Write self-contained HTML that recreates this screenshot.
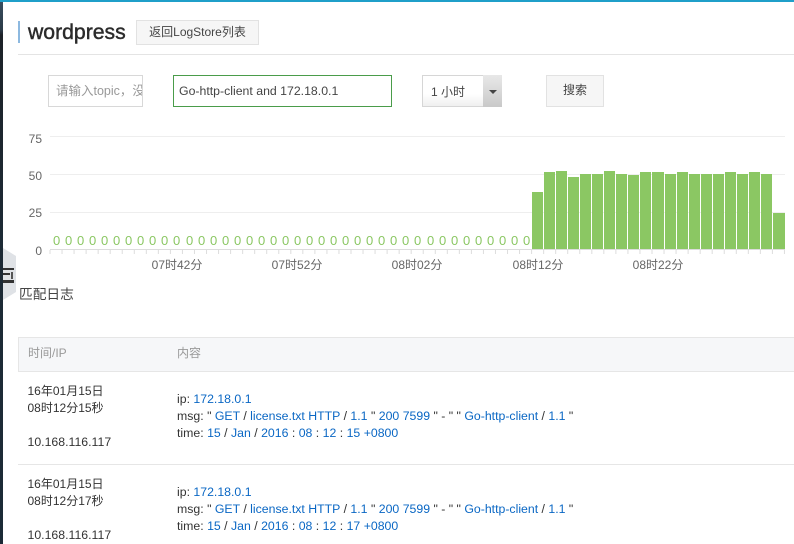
<!DOCTYPE html>
<html><head><meta charset="utf-8"><style>
html,body{margin:0;padding:0}
body{width:794px;height:544px;position:relative;overflow:hidden;background:#fff;font-family:"Liberation Sans","Noto Sans CJK SC",sans-serif;color:#333}
.a{position:absolute;white-space:nowrap}
.t{font-size:12.3px;line-height:17px}
.l{font-size:12px;line-height:17px}
.b{color:#0a67c4}
</style></head><body>
<div class="a" style="left:0;top:0;width:3px;height:544px;background:linear-gradient(#3a4f60 0,#2b3a47 30px,#1c2228 35px,#1d2a35 240px,#1b2a36 544px)"></div>
<div class="a" style="left:0;top:0;width:794px;height:2px;background:#1f9fc9"></div>
<svg class="a" style="left:0;top:0" width="794" height="544" xmlns="http://www.w3.org/2000/svg">
<polygon points="3,248 16,256 16,292 3,300" fill="#dfe2e6"/>
<rect x="3" y="268" width="11" height="2" fill="#333"/><rect x="3" y="273" width="7" height="2" fill="#333"/><rect x="3" y="280" width="11" height="3" fill="#333"/><rect x="11" y="272" width="2" height="7" fill="#555"/>
<g stroke="#eeeeee" stroke-width="1"><line x1="50" x2="785" y1="136.5" y2="136.5"/><line x1="50" x2="785" y1="174.5" y2="174.5"/><line x1="50" x2="785" y1="212.5" y2="212.5"/></g>
<g fill="#8bc763">
<rect x="532" y="192" width="11" height="57"/><rect x="544" y="172" width="11" height="77"/><rect x="556" y="171" width="11" height="78"/><rect x="568" y="177" width="11" height="72"/><rect x="580" y="174" width="11" height="75"/><rect x="592" y="174" width="11" height="75"/><rect x="604" y="171" width="11" height="78"/><rect x="616" y="174" width="11" height="75"/><rect x="628" y="175" width="11" height="74"/><rect x="640" y="172" width="11" height="77"/><rect x="652" y="172" width="12" height="77"/><rect x="665" y="174" width="11" height="75"/><rect x="677" y="172" width="11" height="77"/><rect x="689" y="174" width="11" height="75"/><rect x="701" y="174" width="11" height="75"/><rect x="713" y="174" width="11" height="75"/><rect x="725" y="172" width="11" height="77"/><rect x="737" y="174" width="11" height="75"/><rect x="749" y="172" width="11" height="77"/><rect x="761" y="174" width="11" height="75"/><rect x="773" y="213" width="12" height="36"/>
</g>
<line x1="50" x2="785" y1="249.5" y2="249.5" stroke="#dcdcdc"/>
<line x1="49.5" x2="786" y1="252" y2="252" stroke="#dddddd" stroke-width="4" stroke-dasharray="1 11.04"/>
<text font-size="13" fill="#8bc763" y="245" font-family="Liberation Sans" x="53 65 77 89 101 113 125 137 149 161 173 186 198 210 222 234 246 258 270 282 294 306 318 330 342 354 366 378 390 402 414 427 439 451 463 475 487 499 511 523">0000000000000000000000000000000000000000</text>
<g font-size="12" fill="#666" text-anchor="end" font-family="Liberation Sans"><text x="42" y="143">75</text><text x="42" y="180">50</text><text x="42" y="217">25</text><text x="42" y="255">0</text></g>
<g font-size="12" fill="#666" text-anchor="middle" font-family="Liberation Sans,Noto Sans CJK SC,sans-serif"><text x="177" y="269">07时42分</text><text x="297" y="269">07时52分</text><text x="417" y="269">08时02分</text><text x="538" y="269">08时12分</text><text x="658" y="269">08时22分</text></g>
</svg>

<div class="a" style="left:18px;top:21px;width:2px;height:22px;background:#8db9e0"></div>
<div class="a" style="left:28px;top:20px;font-size:21.2px;line-height:26px;color:#2b2b2b;-webkit-text-stroke:.45px #2b2b2b">wordpress</div>
<div class="a" style="left:136px;top:20px;width:121px;height:23px;background:#f6f6f6;border:1px solid #e2e2e2;font-size:12px;line-height:23px;text-align:center;color:#444">返回LogStore列表</div>
<div class="a" style="left:18px;top:54px;width:776px;height:1px;background:#e4e4e4"></div>

<div class="a" style="left:48px;top:75px;width:93px;height:30px;border:1px solid #d8d8d8;font-size:12.5px;line-height:30px;color:#999;overflow:hidden;text-indent:7px">请输入topic，没</div>
<div class="a" style="left:173px;top:75px;width:217px;height:30px;border:1px solid #4a9c4a;font-size:12.3px;line-height:30px;color:#444;text-indent:5px">Go-http-client and 172.18.0.1</div>
<div class="a" style="left:422px;top:75px;width:60px;height:30px;border:1px solid #d6d6d6;border-right:0;background:linear-gradient(#fff 60%,#efefef);font-size:12px;line-height:32px;color:#444;text-indent:8px">1 小时</div>
<div class="a" style="left:483px;top:75px;width:19px;height:32px;background:linear-gradient(#e8e8e8,#c9c9c9)"></div>
<div class="a" style="left:489px;top:90px;width:0;height:0;border-left:4px solid transparent;border-right:4px solid transparent;border-top:4px solid #444"></div>
<div class="a" style="left:546px;top:75px;width:56px;height:30px;background:#f6f6f6;border:1px solid #e2e2e2;font-size:12px;line-height:29px;text-align:center;color:#444">搜索</div>

<div class="a" style="left:19px;top:285px;font-size:13.7px;line-height:20px;color:#444">匹配日志</div>

<div class="a" style="left:18px;top:337px;width:776px;height:33px;background:#f6f7f9;border:1px solid #e6e6e6;border-right:0"></div>
<div class="a l" style="left:28px;top:345px;color:#999">时间/IP</div>
<div class="a l" style="left:177px;top:345px;color:#999">内容</div>
<div class="a" style="left:18px;top:464px;width:776px;height:1px;background:#e6e6e6"></div>

<div class="a l" style="left:27.5px;top:383px">16年01月15日</div>
<div class="a l" style="left:27.5px;top:400px">08时12分15秒</div>
<div class="a t" style="left:27.5px;top:434px">10.168.116.117</div>
<div class="a t" style="left:177px;top:391px">ip: <span class="b">172.18.0.1</span></div>
<div class="a t" style="left:177px;top:408px">msg: " <span class="b">GET</span> / <span class="b">license.txt</span> <span class="b">HTTP</span> / <span class="b">1.1</span> " <span class="b">200</span> <span class="b">7599</span> " - " " <span class="b">Go-http-client</span> / <span class="b">1.1</span> "</div>
<div class="a t" style="left:177px;top:425px">time: <span class="b">15</span> / <span class="b">Jan</span> / <span class="b">2016</span> : <span class="b">08</span> : <span class="b">12</span> : <span class="b">15</span> <span class="b">+0800</span></div>

<div class="a l" style="left:27.5px;top:476px">16年01月15日</div>
<div class="a l" style="left:27.5px;top:493px">08时12分17秒</div>
<div class="a t" style="left:27.5px;top:527px">10.168.116.117</div>
<div class="a t" style="left:177px;top:484px">ip: <span class="b">172.18.0.1</span></div>
<div class="a t" style="left:177px;top:501px">msg: " <span class="b">GET</span> / <span class="b">license.txt</span> <span class="b">HTTP</span> / <span class="b">1.1</span> " <span class="b">200</span> <span class="b">7599</span> " - " " <span class="b">Go-http-client</span> / <span class="b">1.1</span> "</div>
<div class="a t" style="left:177px;top:518px">time: <span class="b">15</span> / <span class="b">Jan</span> / <span class="b">2016</span> : <span class="b">08</span> : <span class="b">12</span> : <span class="b">17</span> <span class="b">+0800</span></div>
</body></html>
